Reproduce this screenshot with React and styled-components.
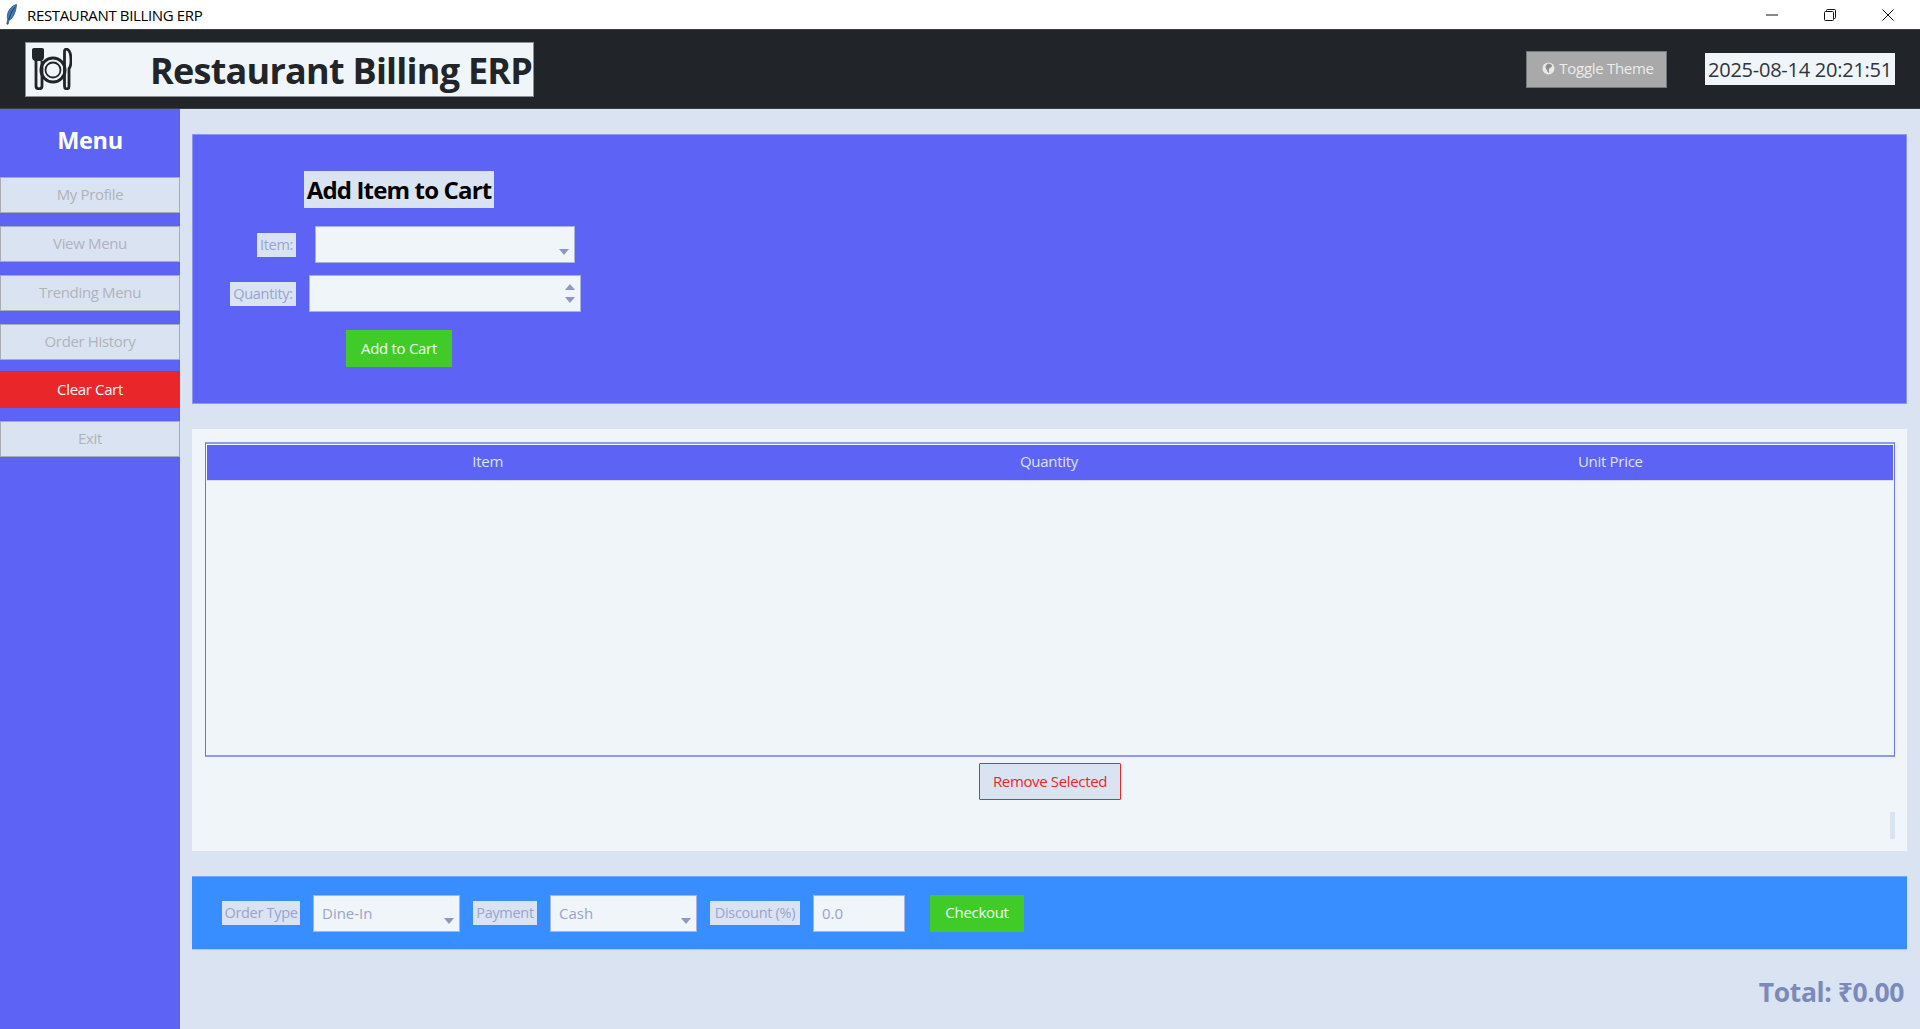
import React from "react";
import styled, { createGlobalStyle } from "styled-components";

const GlobalStyle = createGlobalStyle`
  html, body { margin: 0; padding: 0; height: 100%; overflow: hidden; }
  body { font-family: "Open Sans", "Noto Sans", sans-serif; background: #dae3f2; }
  * { box-sizing: border-box; }
`;

const Page = styled.div`
  display: flex;
  flex-direction: column;
  height: 1029px;
`;

const TitleBar = styled.div`
  height: 29px;
  background: #ffffff;
  display: flex;
  align-items: center;
  padding: 0 3px 0 6px;
  flex-shrink: 0;
`;
const AppTitle = styled.div`
  margin-left: 10px;
  font-size: 15px;
  letter-spacing: -0.35px;
  color: #000000;
`;
const WindowControls = styled.div`
  margin-left: auto;
  display: flex;
  height: 100%;
`;
const WindowButton = styled.div`
  width: 58px;
  display: flex;
  align-items: center;
  justify-content: center;
`;

const Header = styled.header`
  height: 80px;
  flex-shrink: 0;
  background: #212529;
  display: flex;
  align-items: center;
  padding: 0 25px;
  border-top: 1px solid #3a3e44;
  border-bottom: 1px solid #3a3e44;
`;
const Brand = styled.div`
  width: 509px;
  height: 55px;
  display: flex;
  align-items: center;
  background: #f0f5fa;
  border: 1px solid #8b8f96;
  padding-left: 6px;
`;
const BrandName = styled.div`
  margin-left: 78px;
  padding-top: 2px;
  font-size: 36px;
  font-weight: 700;
  letter-spacing: -0.75px;
  white-space: nowrap;
  color: #212529;
`;
const ThemeButton = styled.button`
  margin-left: auto;
  width: 141px;
  height: 37px;
  background: #a9a9a9;
  border: 1px solid #73767a;
  color: #ececec;
  font: 15px "Open Sans", sans-serif;
  letter-spacing: -0.3px;
  display: flex;
  align-items: center;
  justify-content: center;
  gap: 4px;
  padding: 0 0 2px 3px;
`;
const Clock = styled.div`
  margin-left: 38px;
  width: 190px;
  height: 32px;
  background: #f0f5fa;
  color: #2f343a;
  font-size: 20px;
  letter-spacing: -0.25px;
  display: flex;
  align-items: center;
  justify-content: center;
  white-space: nowrap;
`;

const Body = styled.div`
  flex: 1;
  display: flex;
  min-height: 0;
`;

const Sidebar = styled.aside`
  width: 180px;
  background: #5c63f5;
  flex-shrink: 0;
  display: flex;
  flex-direction: column;
  gap: 13px;
`;
const MenuTitle = styled.div`
  height: 55px;
  display: flex;
  align-items: center;
  justify-content: center;
  padding-top: 6px;
  color: #ffffff;
  font-size: 23.500px;
  font-weight: 700;
  letter-spacing: -0.3px;
`;
const NavButton = styled.button`
  height: ${(p) => (p.$danger ? "37px" : "36px")};
  margin-top: ${(p) => (p.$danger ? "-2px" : "0")};
  background: ${(p) => (p.$danger ? "#e92629" : "#dae3f2")};
  color: ${(p) => (p.$danger ? "#ffffff" : "#b0b3ba")};
  border: ${(p) => (p.$danger ? "none" : "1px solid #a9adb3")};
  font: 15px "Open Sans", sans-serif;
  letter-spacing: -0.35px;
  padding: 0 0 2px;
`;

const Main = styled.main`
  flex: 1;
  display: flex;
  flex-direction: column;
  gap: 25px;
  padding: 25px 13px 0 12px;
  min-width: 0;
`;

const FormPanel = styled.section`
  height: 270px;
  background: #5c63f5;
  border: 1px solid #8f95f7;
  padding: 36px 0 0 24px;
`;
const FormGrid = styled.div`
  display: grid;
  grid-template-columns: 92px 272px;
  width: 364px;
  row-gap: 12px;
  align-items: center;
`;
const FormTitle = styled.h2`
  grid-column: 1 / 3;
  justify-self: center;
  margin: 0 0 6px;
  height: 37px;
  width: 190px;
  background: #dae3f2;
  color: #000000;
  font-size: 24px;
  font-weight: 700;
  letter-spacing: -0.85px;
  white-space: nowrap;
  display: flex;
  align-items: center;
  justify-content: center;
`;
const FieldLabel = styled.label`
  height: 24px;
  width: ${(p) => p.$width}px;
  flex-shrink: 0;
  background: #dae3f2;
  color: #99a3cf;
  font-size: 14.500px;
  letter-spacing: -0.3px;
  white-space: nowrap;
  padding-bottom: 1px;
  display: flex;
  align-items: center;
  justify-content: center;
  justify-self: end;
  margin-right: ${(p) => p.$gap || 0}px;
`;
const Field = styled.div`
  height: 37px;
  width: ${(p) => p.$width}px;
  flex-shrink: 0;
  justify-self: center;
  background: #f0f5fa;
  border: 1px solid #aab3de;
  color: #99a3cf;
  font-size: 15px;
  padding: 0 0 1px 8px;
  display: flex;
  align-items: center;
  position: relative;
`;
const Caret = styled.span`
  position: absolute;
  right: 5px;
  bottom: 7px;
  width: 0;
  height: 0;
  border-left: 5px solid transparent;
  border-right: 5px solid transparent;
  border-top: 6px solid #8d97c6;
`;
const SpinUp = styled.span`
  position: absolute;
  right: 5px;
  top: 8px;
  width: 0;
  height: 0;
  border-left: 5px solid transparent;
  border-right: 5px solid transparent;
  border-bottom: 6px solid #8d97c6;
`;
const SpinDown = styled.span`
  position: absolute;
  right: 5px;
  bottom: 8px;
  width: 0;
  height: 0;
  border-left: 5px solid transparent;
  border-right: 5px solid transparent;
  border-top: 6px solid #8d97c6;
`;
const GreenButton = styled.button`
  height: 37px;
  width: ${(p) => p.$width}px;
  flex-shrink: 0;
  background: #41cb29;
  border: none;
  color: #f0fff0;
  font: 15px "Open Sans", sans-serif;
  letter-spacing: -0.3px;
  padding: 0 0 2px;
`;
const AddButton = styled(GreenButton)`
  grid-column: 1 / 3;
  justify-self: center;
  margin-top: 6px;
`;

const CartPanel = styled.section`
  height: 422px;
  background: #f0f5fa;
  padding: 13px 12px 0 13px;
  position: relative;
  display: flex;
  flex-direction: column;
  align-items: center;
`;
const CartTable = styled.div`
  width: 100%;
  height: 315px;
  border: 1px solid #6a70f5;
  border-top: 2px solid #9098f5;
  border-bottom: 2px solid #9098f5;
  padding: 1px 1px 0;
  flex-shrink: 0;
`;
const TableHead = styled.div`
  height: 36px;
  background: #5c63f5;
  border-bottom: 1px solid #d5d9fb;
  padding: 0 2px 3px 0;
  display: grid;
  grid-template-columns: repeat(3, 1fr);
  align-items: center;
  justify-items: center;
  color: #dfe3fb;
  font-size: 15px;
  letter-spacing: -0.3px;
`;
const RemoveButton = styled.button`
  margin-top: 6px;
  width: 142px;
  height: 37px;
  background: #dae3f2;
  border: 1px solid #e92629;
  border-radius: 1px;
  color: #e92629;
  font: 15px "Open Sans", sans-serif;
  letter-spacing: -0.35px;
  padding: 0 0 2px;
`;
const ScrollThumb = styled.div`
  position: absolute;
  right: 12px;
  top: 383px;
  width: 5px;
  height: 27px;
  background: #dae3f2;
`;

const CheckoutPanel = styled.section`
  height: 74px;
  background: #388eff;
  border-top: 1px solid #6fa9ff;
  border-bottom: 1px solid #a9ccf8;
  display: flex;
  align-items: center;
  gap: 13px;
  padding-left: 30px;
`;
const CheckoutButton = styled(GreenButton)`
  margin-left: 12px;
`;

const Total = styled.div`
  margin: 2px 3px 0 0;
  line-height: 30px;
  text-align: right;
  color: #7b8ab8;
  font-size: 26.500px;
  font-weight: 700;
  letter-spacing: -0.4px;
`;

const FeatherIcon = () => (
  <svg width="11" height="21" viewBox="0 0 11 21">
    <path d="M10.500.5C6 1.500 2.500 5.500 1.500 10.500c-.4 2-.2 3.500.3 4.800L.8 20l1.200.3 1-4C7 14.500 10 8 10.500.5z" fill="#3f7cc2" stroke="#24405f" strokeWidth="0.7" />
    <path d="M8.500 3.500C6 7 4 11 2.800 16" stroke="#12263c" strokeWidth="0.8" fill="none" />
  </svg>
);

const PlateIcon = () => (
  <svg width="40" height="42" viewBox="0 0 40 42" fill="none" stroke="#212529">
    <path d="M2 0h8c1.200 0 2 .8 2 2v7c0 2-1 3-2.500 4H2.500C1 12 0 11 0 9V2C0 .8.8 0 2 0z" fill="#212529" strokeWidth="0" />
    <path d="M4 13v25c0 1.500 1 2.800 3 2.800s3-1.300 3-2.800V13" strokeWidth="2.800" />
    <circle cx="21" cy="22" r="12" strokeWidth="3" />
    <circle cx="21" cy="22" r="7.500" strokeWidth="1.800" />
    <path d="M35 1.200c2.500 1 4 5 4 11 0 4-.8 7-2 8.500v17.500c0 1.700-.8 2.600-2.200 2.600s-2.300-.9-2.300-2.600V3c0-1 1-2.200 2.500-1.800z" strokeWidth="2.800" />
  </svg>
);

const GlobeIcon = () => (
  <svg width="13" height="13" viewBox="0 0 13 13">
    <circle cx="6.500" cy="6.500" r="6" fill="#e8e8e8" />
    <path d="M6.500 1.500c1.500.5 3 .5 3.500 2S8 5.500 7 7s1 2.500 0 4c-1.500-1-2-2.500-2.500-3.500S3 5 4 3.500s1.500-1.500 2.500-2z" fill="#8e8e8e" />
  </svg>
);

const MinimizeIcon = () => (
  <svg width="12" height="12" viewBox="0 0 12 12">
    <path d="M0 6h12" stroke="#111" strokeWidth="1" />
  </svg>
);
const RestoreIcon = () => (
  <svg width="12" height="12" viewBox="0 0 12 12" fill="none" stroke="#111">
    <rect x="0.500" y="2.500" width="9" height="9" rx="1" />
    <path d="M2.500 2.500V1.500a1 1 0 0 1 1-1h7a1 1 0 0 1 1 1v7a1 1 0 0 1-1 1h-1" />
  </svg>
);
const CloseIcon = () => (
  <svg width="12" height="12" viewBox="0 0 12 12">
    <path d="M.5.500l11 11M11.500.500l-11 11" stroke="#111" strokeWidth="1" />
  </svg>
);

const NAV_ITEMS = ["My Profile", "View Menu", "Trending Menu", "Order History", "Clear Cart", "Exit"];

export default function App() {
  return (
    <Page>
      <GlobalStyle />
      <TitleBar>
        <FeatherIcon />
        <AppTitle>RESTAURANT BILLING ERP</AppTitle>
        <WindowControls>
          <WindowButton><MinimizeIcon /></WindowButton>
          <WindowButton><RestoreIcon /></WindowButton>
          <WindowButton><CloseIcon /></WindowButton>
        </WindowControls>
      </TitleBar>
      <Header>
        <Brand>
          <PlateIcon />
          <BrandName>Restaurant Billing ERP</BrandName>
        </Brand>
        <ThemeButton><GlobeIcon />Toggle Theme</ThemeButton>
        <Clock>2025-08-14 20:21:51</Clock>
      </Header>
      <Body>
        <Sidebar>
          <MenuTitle>Menu</MenuTitle>
          {NAV_ITEMS.map((item) => (
            <NavButton key={item} $danger={item === "Clear Cart"}>{item}</NavButton>
          ))}
        </Sidebar>
        <Main>
          <FormPanel>
            <FormGrid>
              <FormTitle>Add Item to Cart</FormTitle>
              <FieldLabel $width={39} $gap={13}>Item:</FieldLabel>
              <Field $width={260}><Caret /></Field>
              <FieldLabel $width={66} $gap={13}>Quantity:</FieldLabel>
              <Field $width={272}><SpinUp /><SpinDown /></Field>
              <AddButton $width={106}>Add to Cart</AddButton>
            </FormGrid>
          </FormPanel>
          <CartPanel>
            <CartTable>
              <TableHead>
                <span>Item</span>
                <span>Quantity</span>
                <span>Unit Price</span>
              </TableHead>
            </CartTable>
            <RemoveButton>Remove Selected</RemoveButton>
            <ScrollThumb />
          </CartPanel>
          <CheckoutPanel>
            <FieldLabel $width={78}>Order Type</FieldLabel>
            <Field $width={147}>Dine-In<Caret /></Field>
            <FieldLabel $width={64}>Payment</FieldLabel>
            <Field $width={147}>Cash<Caret /></Field>
            <FieldLabel $width={90}>Discount (%)</FieldLabel>
            <Field $width={92}>0.0</Field>
            <CheckoutButton $width={94}>Checkout</CheckoutButton>
          </CheckoutPanel>
          <Total>Total: ₹0.00</Total>
        </Main>
      </Body>
    </Page>
  );
}
